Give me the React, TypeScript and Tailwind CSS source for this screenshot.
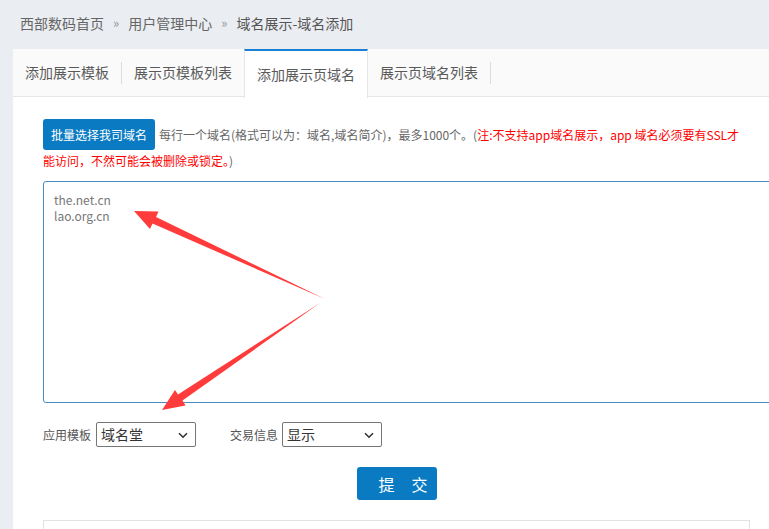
import React from "react";

const font = { fontFamily: '"Noto Sans CJK SC", "Noto Sans", sans-serif' };

function Chevron() {
  return (
    <svg width="10" height="7" viewBox="0 0 10 7" className="absolute right-[7px] top-[9px]">
      <path d="M1 1.2 L5 5.2 L9 1.2" fill="none" stroke="#333" strokeWidth="1.6" />
    </svg>
  );
}

function FakeSelect({ value }: { value: string }) {
  return (
    <div className="relative w-[100px] h-[25px] border border-[#767676] rounded-[2px] bg-white text-[14px] text-[#333] leading-[23px] pl-[4px]">
      {value}
      <Chevron />
    </div>
  );
}

export default function App() {
  return (
    <div className="relative w-[769px] h-[529px] overflow-hidden bg-[#eaedf1]" style={font}>
      {/* breadcrumb */}
      <div className="h-[49px] flex items-center pl-[20px] text-[14px] text-[#666] pb-[3px]">
        <span>西部数码首页</span>
        <span className="mx-[9px] text-[#999] text-[13px]">»</span>
        <span>用户管理中心</span>
        <span className="mx-[9px] text-[#999] text-[13px]">»</span>
        <span className="text-[#555]">域名展示-域名添加</span>
      </div>

      {/* panel */}
      <div className="ml-[13px] bg-white h-[480px] w-[760px]">
        {/* tabs */}
        <div className="h-[48px] bg-[#fafafa] border-b border-[#e6e6e6] flex text-[14px] text-[#5a5a5a]">
          <div className="flex items-center">
            <span className="px-[12px]">添加展示模板</span>
            <span className="w-px h-[22px] bg-[#dcdcdc]" />
          </div>
          <div className="flex items-center">
            <span className="px-[12px]">展示页模板列表</span>
          </div>
          <div className="h-[49px] bg-white border-t-2 border-t-[#1a7fd6] border-x border-x-[#e6e6e6] flex items-center px-[12px] -mb-px">
            添加展示页域名
          </div>
          <div className="flex items-center">
            <span className="px-[12px]">展示页域名列表</span>
            <span className="w-px h-[22px] bg-[#dcdcdc]" />
          </div>
        </div>

        {/* content */}
        <div className="pl-[30px] pt-[22px]">
          <div className="w-[707px]">
            <div className="text-[12px] text-[#666] whitespace-nowrap flex items-center">
              <span className="inline-flex items-center justify-center h-[31px] px-[8px] rounded-[3px] bg-[#0a7bc3] text-white text-[12px] mr-[4px]">
                批量选择我司域名
              </span>
              <span>每行一个域名(格式可以为：域名,域名简介)，最多1000个。(</span>
              <span className="text-[#ff0000]">注:不支持app域名展示，app 域名必须要有SSL才</span>
            </div>
            <div className="text-[12px] text-[#666] leading-[22px] whitespace-nowrap">
              <span className="text-[#ff0000]">能访问，不然可能会被删除或锁定。</span>
              <span>)</span>
            </div>

            <div className="mt-[9px] w-[740px] h-[222px] border border-[#4a8cc2] rounded-[3px] bg-white pt-[10px] pl-[10px] text-[12px] leading-[16px] text-[#777]">
              <div>the.net.cn</div>
              <div>lao.org.cn</div>
            </div>

            <div className="mt-[19px] flex items-center text-[12px] text-[#555]">
              <span className="mr-[5px]">应用模板</span>
              <FakeSelect value="域名堂" />
              <span className="ml-[34px] mr-[4px]">交易信息</span>
              <FakeSelect value="显示" />
            </div>

            <div className="mt-[20px] flex justify-center">
              <div className="w-[80px] h-[33px] rounded-[3px] bg-[#0a7bc3] text-white text-[16px] flex items-center pl-[22px] whitespace-pre">
                <span>提</span>
                <span className="inline-block w-[17px]"> </span>
                <span>交</span>
              </div>
            </div>

            <div className="mt-[20px] h-[60px] border border-[#e2e2e2]" />
          </div>
        </div>
      </div>

      {/* annotation arrows */}
      <svg className="absolute left-0 top-0 pointer-events-none" width="769" height="529" viewBox="0 0 769 529">
        <polygon
          points="134,211 158.5,211.5 156,217 325,299 152.5,223.5 150,229"
          fill="#ff3b3b"
        />
        <polygon
          points="162,410 185.5,405.5 182.5,400.5 320,303 178,394.5 175,390"
          fill="#ff3b3b"
        />
      </svg>
    </div>
  );
}
